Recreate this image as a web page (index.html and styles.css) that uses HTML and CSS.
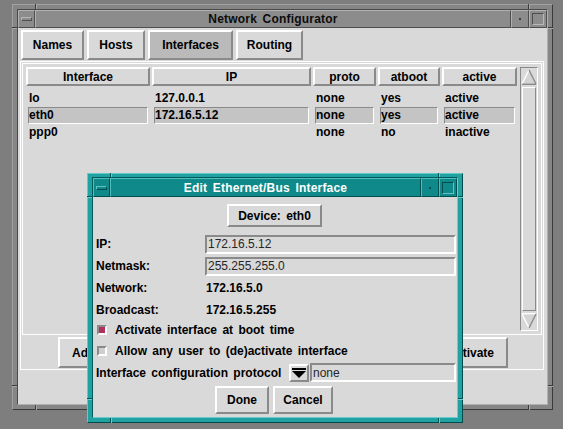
FILE: index.html
```html
<!DOCTYPE html>
<html>
<head>
<meta charset="utf-8">
<title>Network Configurator</title>
<link rel="stylesheet" href="styles.css">
</head>
<body>
<div class="win main-win">
  <span class="n n-t1"></span><span class="n n-t2"></span>
  <span class="n n-b1"></span><span class="n n-b2"></span>
  <span class="n n-l1"></span><span class="n n-l2"></span>
  <span class="n n-r1"></span><span class="n n-r2"></span>
  <div class="frame-inner">
    <div class="titlebar">
      <div class="tb-btn tb-menu"><span class="menu-bar"></span></div>
      <div class="tb-title">Network Configurator</div>
      <div class="tb-btn tb-min"><span class="dot"></span></div>
      <div class="tb-btn tb-max"><span class="sq"></span></div>
    </div>
    <div class="client">
      <div class="tabs">
        <div class="btn tab w-names">Names</div>
        <div class="btn tab w-hosts">Hosts</div>
        <div class="btn tab w-ifaces pressed">Interfaces</div>
        <div class="btn tab w-routing">Routing</div>
      </div>
      <div class="panel">
        <div class="listbox">
          <div class="table">
            <div class="grid head">
              <div class="hcell">Interface</div>
              <div class="hcell">IP</div>
              <div class="hcell">proto</div>
              <div class="hcell">atboot</div>
              <div class="hcell">active</div>
            </div>
            <div class="grid row first">
              <div class="cell">lo</div>
              <div class="cell">127.0.0.1</div>
              <div class="cell">none</div>
              <div class="cell">yes</div>
              <div class="cell">active</div>
            </div>
            <div class="grid row sel">
              <div class="cell">eth0</div>
              <div class="cell">172.16.5.12</div>
              <div class="cell">none</div>
              <div class="cell">yes</div>
              <div class="cell">active</div>
            </div>
            <div class="grid row">
              <div class="cell">ppp0</div>
              <div class="cell"></div>
              <div class="cell">none</div>
              <div class="cell">no</div>
              <div class="cell">inactive</div>
            </div>
          </div>
          <div class="scrollbar">
            <svg class="arrow" width="16" height="18" viewBox="0 0 16 18">
              <polygon points="8,2 15,16 1,16" fill="#d4d4d4"/>
              <line x1="1" y1="16" x2="8" y2="2" stroke="#ffffff" stroke-width="1.4"/>
              <line x1="8" y1="2" x2="15" y2="16" stroke="#8a8a8a" stroke-width="1.4"/>
              <line x1="1" y1="16.3" x2="15" y2="16.3" stroke="#8a8a8a" stroke-width="1.4"/>
            </svg>
            <div class="slider"></div>
            <svg class="arrow" width="16" height="18" viewBox="0 0 16 18">
              <polygon points="1,2 15,2 8,16" fill="#d4d4d4"/>
              <line x1="1" y1="1.7" x2="15" y2="1.7" stroke="#ffffff" stroke-width="1.4"/>
              <line x1="1" y1="2" x2="8" y2="16" stroke="#ffffff" stroke-width="1.4"/>
              <line x1="8" y1="16" x2="15" y2="2" stroke="#8a8a8a" stroke-width="1.4"/>
            </svg>
          </div>
        </div>
        <div class="actions">
          <div class="btn act">Add...</div>
          <div class="btn act">Deactivate</div>
        </div>
      </div>
      <div class="status"></div>
    </div>
  </div>
</div>

<div class="win dialog">
  <span class="n n-t1"></span><span class="n n-t2"></span>
  <span class="n n-b1"></span><span class="n n-b2"></span>
  <span class="n n-l1"></span><span class="n n-l2"></span>
  <span class="n n-r1"></span><span class="n n-r2"></span>
  <div class="frame-inner teal-inner">
    <div class="titlebar teal-title">
      <div class="tb-btn tb-menu"><span class="menu-bar"></span></div>
      <div class="tb-title">Edit Ethernet/Bus Interface</div>
      <div class="tb-btn tb-min"><span class="dot"></span></div>
      <div class="tb-btn tb-max"><span class="sq"></span></div>
    </div>
    <div class="dlg-client">
      <div class="btn device">Device: eth0</div>
      <div class="form">
        <div class="lbl">IP:</div>
        <div class="field"><div class="entry">172.16.5.12</div></div>
        <div class="lbl">Netmask:</div>
        <div class="field"><div class="entry">255.255.255.0</div></div>
        <div class="lbl">Network:</div>
        <div class="val">172.16.5.0</div>
        <div class="lbl">Broadcast:</div>
        <div class="val">172.16.5.255</div>
      </div>
      <div class="check-row r21">
        <span class="checkbox on"></span>
        <span>Activate interface at boot time</span>
      </div>
      <div class="check-row r22">
        <span class="checkbox"></span>
        <span>Allow any user to (de)activate interface</span>
      </div>
      <div class="proto-row">
        <span>Interface configuration protocol</span>
        <div class="btn dropdown">
          <svg width="14" height="10" viewBox="0 0 14 10">
            <rect x="0" y="0" width="14" height="2" fill="#000"/>
            <polygon points="0,3 14,3 7,10" fill="#000"/>
          </svg>
        </div>
        <div class="entry proto-entry">none</div>
      </div>
      <div class="dlg-buttons">
        <div class="btn w-done">Done</div>
        <div class="btn w-cancel">Cancel</div>
      </div>
    </div>
  </div>
</div>
</body>
</html>
```

FILE: styles.css
```css
* { box-sizing: border-box; }
html, body { margin: 0; padding: 0; }
body {
  width: 563px;
  height: 429px;
  overflow: hidden;
  position: relative;
  background: #7e7e7e;
  font: bold 12px "Liberation Sans", Arial, sans-serif;
  word-spacing: 2px;
  color: #000;
}

/* ---------- window frames ---------- */
.win { position: absolute; display: flex; }
.frame-inner { flex: 1; display: flex; flex-direction: column; }

.main-win {
  left: 12px; top: 4px; width: 541px; height: 406px;
  background: #868686;
  border: 1px solid;
  border-color: #a2a2a2 #3a3a3a #3a3a3a #a2a2a2;
  padding: 4px;
}
.main-win .frame-inner { border: 1px solid; border-color: #4a4a4a #b0b0b0 #b0b0b0 #4a4a4a; }

/* resize-handle notches in the window frame */
.n { position: absolute; background: #3c3c3c; }
.main-win .n-t1, .main-win .n-t2 { top: -1px; width: 2px; height: 5px; border-right: 1px solid #a8a8a8; }
.main-win .n-b1, .main-win .n-b2 { bottom: -1px; width: 2px; height: 5px; border-right: 1px solid #a8a8a8; }
.main-win .n-l1, .main-win .n-l2 { left: -1px; height: 2px; width: 5px; border-bottom: 1px solid #a8a8a8; }
.main-win .n-r1, .main-win .n-r2 { right: -1px; height: 2px; width: 5px; border-bottom: 1px solid #a8a8a8; }
.n-t1, .n-b1 { left: 22px; }
.n-t2, .n-b2 { right: 22px; }
.n-l1, .n-r1 { top: 22px; }
.n-l2, .n-r2 { bottom: 22px; }

.titlebar {
  height: 18px;
  display: flex;
  flex: none;
  background: #8c8c8c;
}
.tb-btn, .tb-title {
  border: 1px solid;
  border-color: #b2b2b2 #4e4e4e #4e4e4e #b2b2b2;
  display: flex;
  align-items: center;
  justify-content: center;
}
.tb-menu { width: 17px; }
.tb-min, .tb-max { width: 18px; }
.tb-title { flex: 1; font-size: 12px; color: #0c0c0c; letter-spacing: 0.2px; }
.menu-bar {
  width: 11px; height: 4px;
  border: 1px solid; border-color: #b8b8b8 #4e4e4e #4e4e4e #b8b8b8;
}
.dot { width: 2px; height: 2px; background: #3c3c3c; }
.sq {
  width: 12px; height: 12px;
  border: 1px solid; border-color: #4e4e4e #b8b8b8 #b8b8b8 #4e4e4e;
}

.client {
  flex: 1;
  background: #d9d9d9;
  padding: 2px 2px 0 2px;
  display: flex;
  flex-direction: column;
}

/* ---------- generic button ---------- */
.btn {
  display: flex;
  align-items: center;
  justify-content: center;
  background: #d9d9d9;
  border: 2px solid;
  border-color: #ffffff #8a8a8a #8a8a8a #ffffff;
  white-space: nowrap;
}

.tabs { display: flex; gap: 3px; margin-left: 1px; height: 30px; flex: none; }
.tab { height: 30px; }
.w-names { width: 63px; }
.w-hosts { width: 58px; }
.w-ifaces { width: 85px; }
.w-routing { width: 67px; }
.tab.pressed { background: #bababa; }

/* ---------- list panel ---------- */
.panel {
  margin: 1px 1px 0 0;
  border: 1px solid #ffffff;
  padding: 0 0 1px 0;
  display: flex;
  flex-direction: column;
  flex: none;
}
.listbox {
  margin: 1px;
  height: 272px;
  border: 1px solid #ffffff;
  padding: 3px;
  display: flex;
}
.table { width: 491px; }
.grid {
  display: grid;
  grid-template-columns: 124px 159px 63px 62px 75px;
  column-gap: 2px;
}
.head { height: 19px; }
.hcell {
  border: 2px solid;
  border-color: #ffffff #8a8a8a #8a8a8a #ffffff;
  display: flex;
  align-items: center;
  justify-content: center;
}
.row { height: 17px; }
.row.first { margin-top: 4px; }
.cell {
  margin: 0 2px;
  border: 1px solid transparent;
  line-height: 15px;
  white-space: nowrap;
}
.row.sel .cell {
  background: #c4c4c4;
  border-color: #8a8a8a #ffffff #ffffff #8a8a8a;
}

.scrollbar {
  margin-left: 3px;
  width: 18px;
  border: 1px solid;
  border-color: #8a8a8a #ffffff #ffffff #8a8a8a;
  display: flex;
  flex-direction: column;
}
.arrow { display: block; flex: none; }
.slider {
  flex: 1;
  margin: 1px 1px;
  border: 1px solid;
  border-color: #ffffff #8a8a8a #8a8a8a #ffffff;
}

.actions {
  display: flex;
  justify-content: space-between;
  height: 31px;
  margin: 1px 35px 0 37px;
}
.act { height: 31px; padding: 0 12px; }

.status { flex: 1; }

/* ---------- dialog ---------- */
.dialog {
  left: 87px; top: 173px; width: 376px; height: 250px;
  background: #21a2a2;
  border: 1px solid;
  border-color: #64c8c8 #004a4a #004a4a #64c8c8;
  padding: 3px 4px 4px 4px;
}
.dialog .n { background: #005252; }
.dialog .n-t1, .dialog .n-t2 { top: -1px; width: 2px; height: 4px; border-right: 1px solid #6ccccc; }
.dialog .n-b1, .dialog .n-b2 { bottom: -1px; width: 2px; height: 5px; border-right: 1px solid #6ccccc; }
.dialog .n-l1, .dialog .n-l2 { left: -1px; height: 2px; width: 5px; border-bottom: 1px solid #6ccccc; }
.dialog .n-r1, .dialog .n-r2 { right: -1px; height: 2px; width: 5px; border-bottom: 1px solid #6ccccc; }

.teal-inner { border: 1px solid; border-color: #005a5a #6ccccc #6ccccc #005a5a; }
.teal-title { height: 19px; background: #0f8989; }
.teal-title .tb-btn, .teal-title .tb-title {
  border-color: #50bcbc #004e4e #004e4e #50bcbc;
}
.teal-title .tb-title { color: #ffffff; }
.teal-title .menu-bar { border-color: #60c4c4 #004e4e #004e4e #60c4c4; }
.teal-title .dot { background: #005050; }
.teal-title .sq { border-color: #004e4e #60c4c4 #60c4c4 #004e4e; }

.dlg-client {
  flex: 1;
  background: #d9d9d9;
  padding: 0 1px 0 3px;
  display: flex;
  flex-direction: column;
}
.device {
  align-self: center;
  width: 95px;
  height: 23px;
  margin: 7px 3px 6px 0;
}
.form {
  display: grid;
  grid-template-columns: 109px 251px;
  grid-template-rows: 22px 22px 22px 21px;
  align-items: center;
}
.field { display: flex; align-items: center; }
.entry {
  height: 19px;
  width: 100%;
  border: 2px solid;
  border-color: #8a8a8a #ffffff #ffffff #8a8a8a;
  padding: 0 1px;
  font-weight: normal;
  word-spacing: 0;
  color: #262626;
  display: flex;
  align-items: center;
}
.val { padding-left: 1px; }

.check-row { display: flex; align-items: center; }
.r21 { height: 20px; }
.r22 { height: 22px; }
.checkbox {
  width: 10px; height: 10px;
  margin: 0 8px 0 1px;
  border: 2px solid;
  border-color: #8a8a8a #ffffff #ffffff #8a8a8a;
  background: #cfcfcf;
}
.checkbox.on { background: #b3305c; }

.proto-row { display: flex; align-items: center; height: 21px; }
.dropdown { width: 20px; height: 18px; margin-left: auto; }
.proto-entry { width: 146px; margin-left: 1px; flex: none; }

.dlg-buttons {
  display: flex;
  justify-content: center;
  gap: 4px;
  margin: 3px 4px 0 0;
}
.dlg-buttons .btn { height: 28px; }
.w-done { width: 54px; }
.w-cancel { width: 60px; }
```
